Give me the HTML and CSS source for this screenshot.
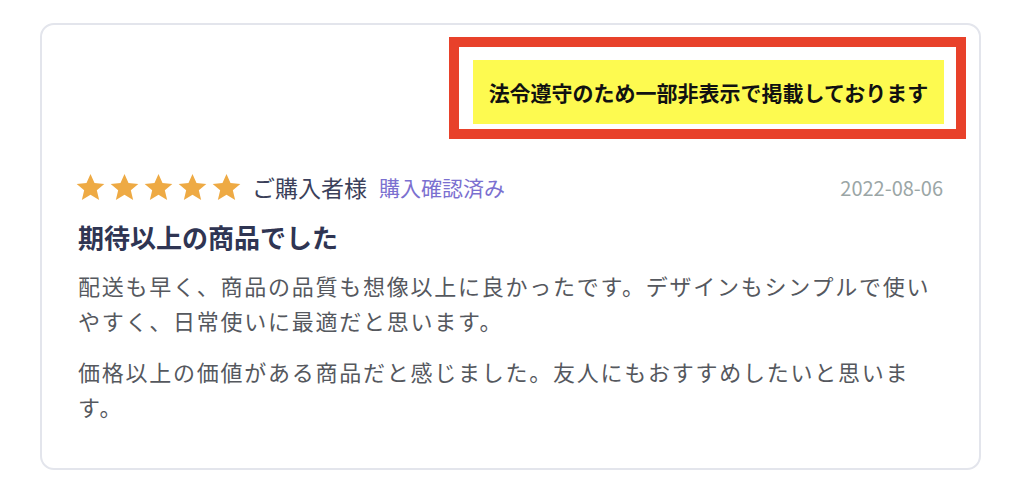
FILE: index.html
```html
<!DOCTYPE html>
<html lang="ja">
<head>
    <meta charset="utf-8"/>
    <title>レビュー</title>
    <link rel="stylesheet" href="styles.css">
</head>
<body>
<div class="review">
    <div class="notice">
        <div class="notice-inner">法令遵守のため一部非表示で掲載しております</div>
    </div>
    <div class="review-head">
        <div class="stars">
            <svg class="star" viewBox="0 0 24 24"><path d="M12 1.5l3.1 7.1 7.6.6-5.8 5 1.8 7.5L12 17.7l-6.7 4 1.8-7.5-5.8-5 7.6-.6z"/></svg>
            <svg class="star" viewBox="0 0 24 24"><path d="M12 1.5l3.1 7.1 7.6.6-5.8 5 1.8 7.5L12 17.7l-6.7 4 1.8-7.5-5.8-5 7.6-.6z"/></svg>
            <svg class="star" viewBox="0 0 24 24"><path d="M12 1.5l3.1 7.1 7.6.6-5.8 5 1.8 7.5L12 17.7l-6.7 4 1.8-7.5-5.8-5 7.6-.6z"/></svg>
            <svg class="star" viewBox="0 0 24 24"><path d="M12 1.5l3.1 7.1 7.6.6-5.8 5 1.8 7.5L12 17.7l-6.7 4 1.8-7.5-5.8-5 7.6-.6z"/></svg>
            <svg class="star" viewBox="0 0 24 24"><path d="M12 1.5l3.1 7.1 7.6.6-5.8 5 1.8 7.5L12 17.7l-6.7 4 1.8-7.5-5.8-5 7.6-.6z"/></svg>
        </div>
        <span class="author">ご購入者様</span>
        <span class="verified">購入確認済み</span>
        <span class="date">2022-08-06</span>
    </div>
    <h3 class="review-title">期待以上の商品でした</h3>
    <p class="review-text">配送も早く、商品の品質も想像以上に良かったです。デザインもシンプルで使いやすく、日常使いに最適だと思います。</p>
    <p class="review-text">価格以上の価値がある商品だと感じました。友人にもおすすめしたいと思います。</p>
</div>
</body>
</html>
```

FILE: styles.css
```css
* {
    margin: 0;
    padding: 0;
    box-sizing: border-box;
}

body {
    background: #fff;
    font-family: "Noto Sans CJK JP", "Noto Sans", sans-serif;
}

.review {
    width: 941px;
    height: 447px;
    margin: 23px 0 0 40px;
    border: 2px solid #e3e5ec;
    border-radius: 14px;
    padding: 12px 36px 0 36px;
    display: flex;
    flex-direction: column;
}

.notice {
    align-self: flex-end;
    margin-right: -23px;
    width: 517px;
    height: 102px;
    border: 10px solid #e8412a;
    background: #fff;
    padding: 13px 12px 5px 14px;
}

.notice-inner {
    height: 100%;
    background: #fdfa50;
    color: #111;
    font-weight: bold;
    font-size: 21px;
    display: flex;
    align-items: center;
    justify-content: center;
}

.review-head {
    display: flex;
    align-items: center;
    margin-top: 34px;
    height: 28px;
}

.stars {
    display: flex;
    gap: 3px;
    margin-left: -3px;
}

.star {
    width: 31px;
    height: 31px;
    fill: #eeaa44;
}

.author {
    margin-left: 10px;
    font-size: 23px;
    color: #3b3f5a;
}

.verified {
    margin-left: 12px;
    font-size: 21px;
    color: #7b70d0;
}

.date {
    margin-left: auto;
    font-size: 20px;
    color: #9ba6a6;
}

.review-title {
    margin-top: 18px;
    font-size: 26px;
    font-weight: bold;
    color: #2f3553;
    line-height: 36px;
}

.review-text {
    margin-top: 13px;
    font-size: 22px;
    letter-spacing: 1.75px;
    line-height: 35px;
    color: #55585e;
}

.review-text + .review-text {
    margin-top: 16px;
}
```
